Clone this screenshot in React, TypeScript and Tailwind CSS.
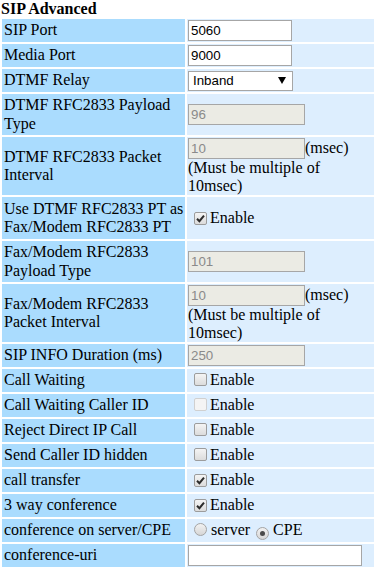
import type { ReactNode } from 'react'

function TextBox({ value, width, disabled }: { value: string; width: string; disabled?: boolean }) {
  return (
    <span
      className={`inline-block h-[21px] ${width} border border-[#a6a6a6] px-[2px] font-['Liberation_Sans'] text-[13.33px] leading-[19px] ${
        disabled ? 'bg-[#ebebe4] text-[#8a8a8a]' : 'bg-white text-black'
      }`}
    >
      {value || '\u00a0'}
    </span>
  )
}

function Check({ checked, disabled }: { checked?: boolean; disabled?: boolean }) {
  return (
    <span
      className={`ml-[6px] mr-[3px] inline-flex h-[13px] w-[13px] items-center justify-center rounded-[2px] border align-[-1px] ${
        disabled
          ? 'border-[#d0d0d0] bg-[#f4f4f4]'
          : 'border-[#9c9c9c] bg-gradient-to-b from-[#f4f4f4] to-[#dcdcdc]'
      }`}
    >
      {checked && (
        <svg width="11" height="11" viewBox="0 0 11 11">
          <path d="M2 5.8 L4.4 8.2 L9 2.6" fill="none" stroke="#2b2b2b" strokeWidth="2" />
        </svg>
      )}
    </span>
  )
}

function Radio({ checked }: { checked?: boolean }) {
  return (
    <span className="ml-[6px] mr-[4px] inline-flex h-[13px] w-[13px] items-center justify-center rounded-full border border-[#a4a4a4] bg-gradient-to-b from-[#f2f2f2] to-[#d6d6d6] align-[-1px]">
      {checked && <span className="h-[5px] w-[5px] rounded-full bg-[#4a4a4a]" />}
    </span>
  )
}

function Row({ label, children, h = 'h-[23px]' }: { label: ReactNode; children: ReactNode; h?: string }) {
  return (
    <tr className={h}>
      <td className="w-[183px] bg-[#aadcfe] p-[1px] pl-[2px] align-middle leading-[18.4px]">{label}</td>
      <td className="bg-[#ddeefe] p-[1px] align-middle leading-[18.4px]">{children}</td>
    </tr>
  )
}

const Msec = ({ value }: { value: string }) => (
  <div className="leading-[17.5px]">
    <TextBox value={value} width="w-[117px]" disabled />
    (msec)
    <br />
    (Must be multiple of
    <br />
    10msec)
  </div>
)

const Enable = ({ checked, disabled }: { checked?: boolean; disabled?: boolean }) => (
  <>
    <Check checked={checked} disabled={disabled} />
    Enable
  </>
)

export default function App() {
  return (
    <div className="h-[567px] w-[374px] overflow-hidden bg-white font-['Liberation_Serif'] text-[16px] text-black">
      <div className="h-[17px] pl-[1px] font-bold leading-[17px]">SIP Advanced</div>
      <table className="w-[378px] border-separate border-spacing-[2px]">
        <tbody>
          <Row label="SIP Port">
            <TextBox value="5060" width="w-[104px]" />
          </Row>
          <Row label="Media Port">
            <TextBox value="9000" width="w-[104px]" />
          </Row>
          <Row label="DTMF Relay">
            <span className="inline-flex h-[20px] w-[105px] items-center justify-between border border-[#a6a6a6] bg-white pl-[4px] pr-[6px] font-['Liberation_Sans'] text-[13.33px] leading-[18px]">
              Inband
              <svg width="8" height="7" viewBox="0 0 8 7">
                <path d="M0 0 H8 L4 7 Z" fill="#000" />
              </svg>
            </span>
          </Row>
          <Row h="h-[41px]" label={<>DTMF RFC2833 Payload<br />Type</>}>
            <TextBox value="96" width="w-[117px]" disabled />
          </Row>
          <Row h="h-[58px]" label={<>DTMF RFC2833 Packet<br />Interval</>}>
            <Msec value="10" />
          </Row>
          <Row h="h-[42px]" label={<>Use DTMF RFC2833 PT as<br />Fax/Modem RFC2833 PT</>}>
            <Enable checked />
          </Row>
          <Row h="h-[41px]" label={<>Fax/Modem RFC2833<br />Payload Type</>}>
            <TextBox value="101" width="w-[117px]" disabled />
          </Row>
          <Row h="h-[58px]" label={<>Fax/Modem RFC2833<br />Packet Interval</>}>
            <Msec value="10" />
          </Row>
          <Row label="SIP INFO Duration (ms)">
            <TextBox value="250" width="w-[117px]" disabled />
          </Row>
          <Row label="Call Waiting">
            <Enable />
          </Row>
          <Row label="Call Waiting Caller ID">
            <Enable disabled />
          </Row>
          <Row label="Reject Direct IP Call">
            <Enable />
          </Row>
          <Row label="Send Caller ID hidden">
            <Enable />
          </Row>
          <Row label="call transfer">
            <Enable checked />
          </Row>
          <Row label="3 way conference">
            <Enable checked />
          </Row>
          <Row label="conference on server/CPE">
            <Radio />
            server
            <Radio checked />
            CPE
          </Row>
          <Row label="conference-uri">
            <TextBox value="" width="w-[174px]" />
          </Row>
        </tbody>
      </table>
    </div>
  )
}
